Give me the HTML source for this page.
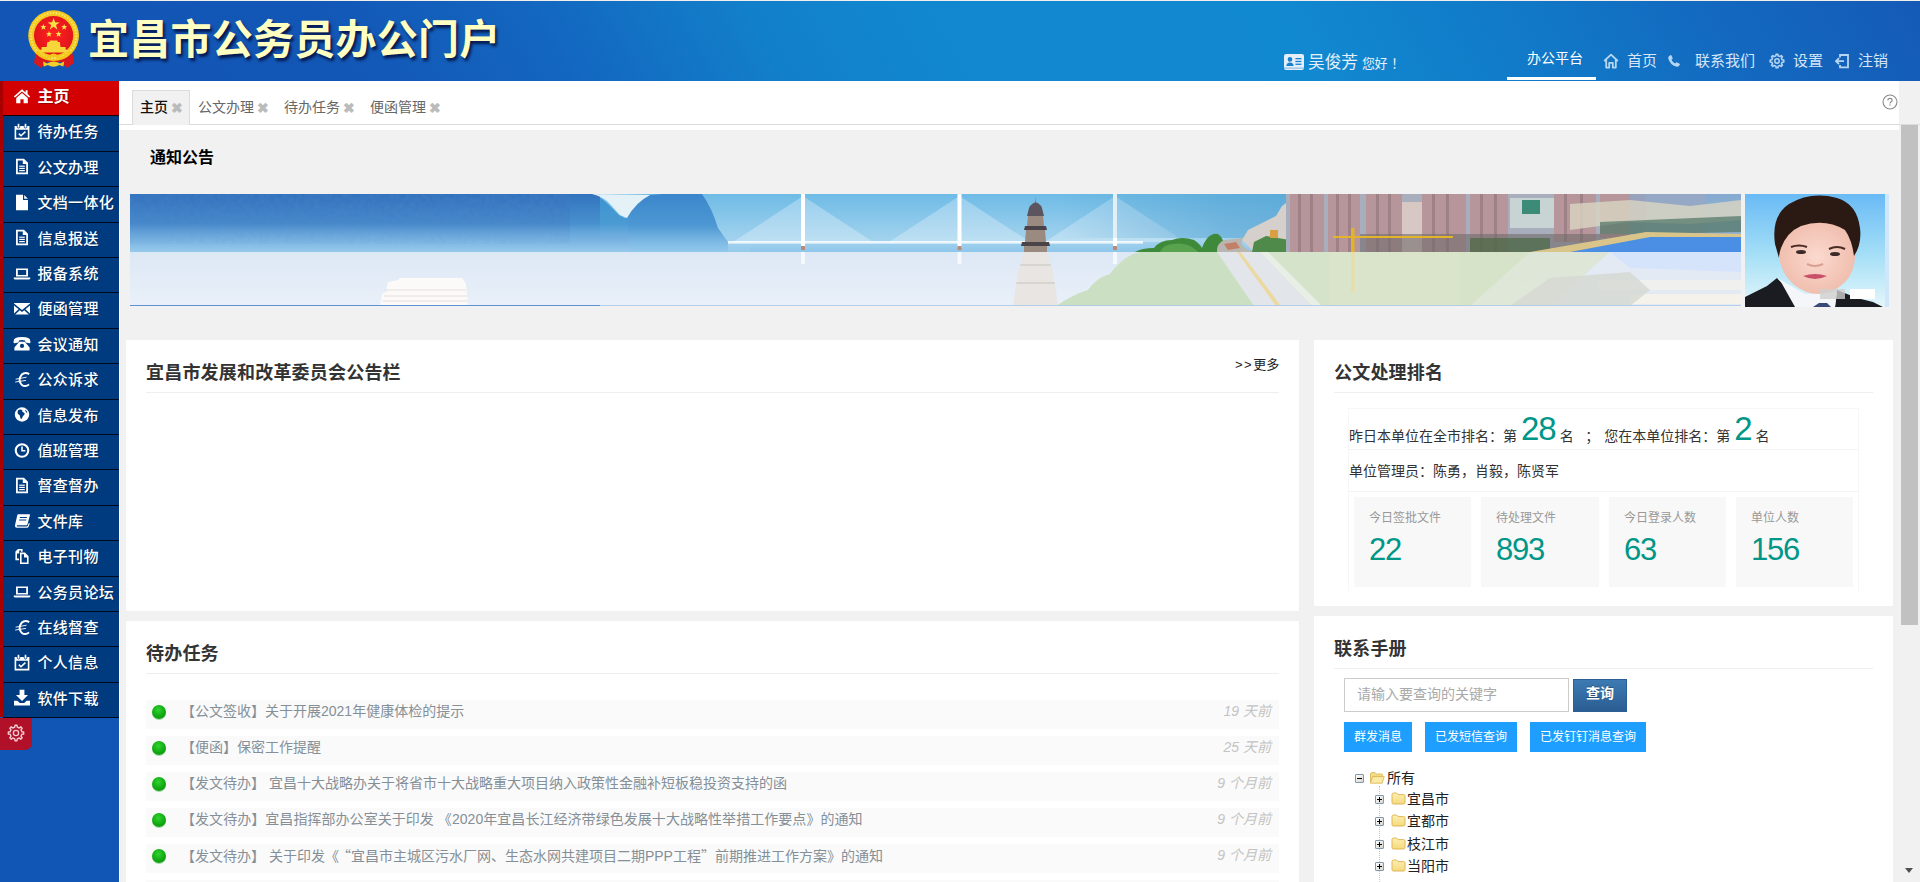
<!DOCTYPE html>
<html lang="zh-CN">
<head>
<meta charset="utf-8">
<title>宜昌市公务员办公门户</title>
<style>
*{box-sizing:border-box;margin:0;padding:0}
html,body{width:1920px;height:882px;overflow:hidden;background:#f1f1f1;font-family:"Liberation Sans","Noto Sans CJK SC",sans-serif;font-size:14px;color:#333}
.abs{position:absolute}
#header{position:absolute;left:0;top:0;width:1920px;height:81px;background:linear-gradient(60deg,#1255b5 0%,#1357b6 18%,#1366bf 29%,#127fca 40%,#1187cf 48%,#1189d0 67%,#1179c8 79%,#1369bf 89%,#145ab6 100%);border-top:1px solid #f3eeee}
#title{position:absolute;left:88px;top:9px;font-size:41px;font-weight:700;color:#ffffc2;letter-spacing:0.25px;line-height:60px;white-space:nowrap;text-shadow:2px 3px 3px rgba(0,0,40,.75)}
.nav{position:absolute;color:#d6e6f7;font-size:15px;line-height:20px;white-space:nowrap}
#side{position:absolute;left:0;top:81px;width:119px;height:801px;background:#1155b5}
#side .bar{position:absolute;left:0;top:0;width:3px;height:636px;background:#a80000}
.mi{position:absolute;left:3px;width:116px;height:35.4px;background:#003b7f;border-bottom:1.4px solid #000a1c;color:#fff;font-size:15px;font-weight:500;line-height:32px;padding-left:34.5px;white-space:nowrap;letter-spacing:0.3px;text-shadow:1px 1px 0 rgba(0,0,0,.3)}
.mi.act{background:#d20000;border-bottom-color:#1a0000;font-weight:700;font-size:16px;line-height:31px;letter-spacing:0}
.mi svg{position:absolute;left:10px;top:6.5px;width:18px;height:17px;fill:#fff}
#tabs{position:absolute;left:119px;top:81px;width:1780px;height:49px;background:#fff}
#tabline{position:absolute;left:119px;top:124px;width:1801px;height:1px;background:#dcdcdc}
.tab{position:absolute;top:97px;font-size:14px;line-height:20px;color:#666;white-space:nowrap}
.tab i{font-style:normal;color:#bbb;font-weight:700;font-size:14px;margin-left:2.5px;position:relative;top:.5px}
#tabact{position:absolute;left:132px;top:90px;width:58px;height:35px;background:#f1f1f1;border:1px solid #dcdcdc;border-bottom:none}
.panel{position:absolute;background:#fff}
.ptitle{position:absolute;font-size:18px;font-weight:700;color:#333;line-height:24px;white-space:nowrap;letter-spacing:.2px;margin-top:.7px}
.hr{position:absolute;height:1px;background:#eee}
.row{position:absolute;left:146px;width:1133px;height:29px;background:#fafafa;font-size:14px;line-height:24px;color:#858f97;white-space:nowrap;overflow:hidden}
.row b{position:absolute;left:5.5px;top:5px;width:14px;height:14px;border-radius:50%;background:radial-gradient(circle at 45% 35%,#2fd42f 0%,#12a812 55%,#0a8a0a 100%);box-shadow:0 1px 0 #9fd89f}
.row span{position:absolute;left:35px;top:-1px}
.row em{position:absolute;right:8px;top:-1px;color:#c3c3c3;font-style:italic}
.big{font-size:33px;color:#009688;letter-spacing:-0.9px;line-height:34px;position:relative;top:-1px}
.stat{position:absolute;top:497px;width:117px;height:90px;background:#f8f8f8;padding:12px 15px}
.stat h3{font-size:12px;font-weight:400;color:#999;line-height:18px;white-space:nowrap}
.stat p{font-size:31px;color:#009688;line-height:40px;letter-spacing:-1.2px;margin-top:2.5px;font-weight:300}
.bbtn{position:absolute;top:722px;height:30px;background:#1E9FFF;color:#fff;font-size:12px;line-height:30px;text-align:center;white-space:nowrap}
.tnode{position:absolute;height:20px;font-size:14px;line-height:20px;color:#222;white-space:nowrap}
.tnode svg,.tnode span,.tnode i{position:absolute}
.tnode span{top:0}
.tnode .pm{left:0;top:6px;width:9px;height:9px;border:1px solid #8497ab;background:linear-gradient(135deg,#fff,#d4d4d0);border-radius:1px}
.tnode .pm s{position:absolute;left:1px;top:3px;width:5px;height:1px;background:#000}
.tnode .pm u{position:absolute;left:3px;top:1px;width:1px;height:5px;background:#000}
q{quotes:none;font-family:"Noto Sans CJK SC",sans-serif}
q:before,q:after{content:none}
.gear{position:absolute;left:0;top:637px;width:32px;height:32px;background:#b01028;border-radius:0 0 7px 0;padding:6.3px 0 0 7.3px}
</style>
</head>
<body>
<div id="header">
  <div id="title">宜昌市公务员办公门户</div>
  <svg class="abs" style="left:24px;top:6px" width="60" height="64" viewBox="0 0 60 64">
    <defs><radialGradient id="eg" cx="50%" cy="45%" r="55%"><stop offset="0" stop-color="#f22"/><stop offset="1" stop-color="#e0141a"/></radialGradient></defs>
    <path d="M12 44 L10 56 L17 61 L23 55 H37 L43 61 L50 56 L48 44 Z" fill="#d8181c"/>
    <circle cx="29.6" cy="28.6" r="25.4" fill="#f3c81c"/>
    <circle cx="29.6" cy="28.6" r="22.6" fill="none" stroke="#f9e36a" stroke-width="2.2" stroke-dasharray="1.6 1.4"/>
    <circle cx="29.6" cy="28.6" r="19.6" fill="url(#eg)"/>
    <path d="M29.6 11 L31.1 15.3 L35.6 15.4 L32 18.1 L33.3 22.4 L29.6 19.8 L25.9 22.4 L27.2 18.1 L23.6 15.4 L28.1 15.3 Z" fill="#fbe04a"/>
    <path d="M19.4 17 l.8 2.1 2.2.1 -1.7 1.4 .6 2.2 -1.9-1.2 -1.9 1.2 .6-2.2 -1.7-1.4 2.2-.1Z M40.2 17 l.8 2.1 2.2.1 -1.7 1.4 .6 2.2 -1.9-1.2 -1.9 1.2 .6-2.2 -1.7-1.4 2.2-.1Z M25 24 l.8 2.1 2.2.1 -1.7 1.4 .6 2.2 -1.9-1.2 -1.9 1.2 .6-2.2 -1.7-1.4 2.2-.1Z M34.6 24 l.8 2.1 2.2.1 -1.7 1.4 .6 2.2 -1.9-1.2 -1.9 1.2 .6-2.2 -1.7-1.4 2.2-.1Z" fill="#fbe04a"/>
    <path d="M23.4 35 L25.4 35 L25.8 33.6 H33.4 L33.8 35 L35.8 35 L36.6 40 H41.6 V42.6 L44.6 43 V45.4 H14.6 V43 L17.6 42.6 V40 H22.6 Z" fill="#f6d63a"/>
    <path d="M13 44.5 Q20 54 26 49.4 Q29.6 46.4 33.2 49.4 Q39 54 46.2 44.5" fill="none" stroke="#f3c81c" stroke-width="2.6"/>
    <path d="M19 54.6 L23 56.4 Q29.6 52.6 36.2 56.4 L40.2 54.6 L39.4 59.4 L35.4 58 Q29.6 61.6 23.8 58 L19.8 59.4 Z" fill="#f3cf2a"/>
  </svg>
<div class="abs" style="left:1284px;top:53px;width:20px;height:16px;background:#e4eef9;border-radius:2px">
  <svg width="20" height="16" viewBox="0 0 20 16"><circle cx="6" cy="5.4" r="2.3" fill="#1580cc"/><path d="M2.4 12 Q2.4 8.4 6 8.4 Q9.6 8.4 9.6 12 Z" fill="#1580cc"/><rect x="11.4" y="4" width="6" height="1.3" fill="#1580cc"/><rect x="11.4" y="6.8" width="6" height="1.3" fill="#1580cc"/><rect x="11.4" y="9.6" width="6" height="1.3" fill="#1580cc"/><rect x="0" y="13.6" width="20" height="1" fill="#1580cc" opacity=".5"/></svg>
</div>
<div class="nav" style="left:1308px;top:51px;font-size:16.7px;color:#e6f0fa;line-height:22px">吴俊芳</div>
<div class="nav" style="left:1362px;top:54px;font-size:13px;color:#e6f0fa;line-height:18px;letter-spacing:-0.4px">您好<span style="margin-left:4px">！</span></div>
<div class="nav" style="left:1527px;top:47px;font-size:14px;color:#fff;line-height:20px">办公平台</div>
<div class="abs" style="left:1507px;top:76px;width:89px;height:3px;background:#fff"></div>
<svg class="abs" style="left:1603px;top:52px" width="16" height="16" viewBox="0 0 16 16"><path d="M1.2 8 L8 1.6 L14.8 8 M3.2 6.6 V14.6 H6.2 V9.8 H9.8 V14.6 H12.8 V6.6" fill="none" stroke="#b7d6f2" stroke-width="1.8" stroke-linejoin="round"/></svg>
<div class="nav" style="left:1627px;top:50px">首页</div>
<svg class="abs" style="left:1667px;top:53px" width="14" height="14" viewBox="0 0 14 14"><path d="M3.2 1.2 Q4.2 0.8 4.6 1.8 L5.6 4 Q5.8 4.8 5.2 5.2 L4.4 5.8 Q5.6 8.4 8.2 9.6 L8.8 8.8 Q9.2 8.2 10 8.4 L12.2 9.4 Q13.2 9.8 12.8 10.8 Q12 13 9.8 12.8 Q3.2 11.4 1.2 4.2 Q1 2 3.2 1.2 Z" fill="#b7d6f2"/></svg>
<div class="nav" style="left:1695px;top:50px">联系我们</div>
<svg class="abs" style="left:1769px;top:52px" width="16" height="16" viewBox="0 0 20 20"><path fill="none" stroke="#b7d6f2" stroke-width="1.9" stroke-linejoin="round" d="M16.45 8.59 L18.53 8.89 L18.53 11.11 L16.45 11.41 L15.56 13.56 L16.82 15.24 L15.24 16.82 L13.56 15.56 L11.41 16.45 L11.11 18.53 L8.89 18.53 L8.59 16.45 L6.44 15.56 L4.76 16.82 L3.18 15.24 L4.44 13.56 L3.55 11.41 L1.47 11.11 L1.47 8.89 L3.55 8.59 L4.44 6.44 L3.18 4.76 L4.76 3.18 L6.44 4.44 L8.59 3.55 L8.89 1.47 L11.11 1.47 L11.41 3.55 L13.56 4.44 L15.24 3.18 L16.82 4.76 L15.56 6.44 Z"/><circle cx="10" cy="10" r="2.8" fill="none" stroke="#b7d6f2" stroke-width="1.9"/></svg>
<div class="nav" style="left:1793px;top:50px">设置</div>
<svg class="abs" style="left:1834px;top:52px" width="16" height="16" viewBox="0 0 16 16"><path d="M6 4.4 V2 H14 V14.4 H6 V12" fill="none" stroke="#b7d6f2" stroke-width="1.8"/><path d="M10 8.2 H2.4 M5 5.2 L2 8.2 L5 11.2" fill="none" stroke="#b7d6f2" stroke-width="1.8"/></svg>
<div class="nav" style="left:1858px;top:50px">注销</div>

</div>
<div id="side"><div class="bar"></div>
<div class="mi act" style="top:0.0px"><svg viewBox="0 0 18 17"><path d="M9 1.2 L0.8 8.4 L2 9.6 L9 3.6 L16 9.6 L17.2 8.4 L14.6 6.1 V2.2 H12.6 V4.4 Z"/><path d="M9 5 L3.2 10 V15.2 H7.4 V11.2 H10.6 V15.2 H14.8 V10 Z"/></svg>主页</div>
<div class="mi" style="top:35.4px"><svg viewBox="0 0 18 17"><path fill-rule="evenodd" d="M1.6 3 H16.4 V16.4 H1.6 Z M3.2 6.8 V14.8 H14.8 V6.8 Z"/><rect x="4.2" y="0.6" width="2.6" height="4.4" rx="1.1" stroke="#003b7f" stroke-width=".8"/><rect x="11.2" y="0.6" width="2.6" height="4.4" rx="1.1" stroke="#003b7f" stroke-width=".8"/><path d="M5.8 10.6 L8 12.8 L12.4 8.6" fill="none" stroke="#fff" stroke-width="1.5"/></svg>待办任务</div>
<div class="mi" style="top:70.8px"><svg viewBox="0 0 18 17"><path fill-rule="evenodd" d="M3 0.8 H11 L15 4.8 V16.2 H3 Z M4.8 2.6 V14.4 H13.2 V6 H9.8 V2.6 Z"/><rect x="6.2" y="7.6" width="5.6" height="1.2"/><rect x="6.2" y="9.8" width="5.6" height="1.2"/><rect x="6.2" y="12" width="5.6" height="1.2"/></svg>公文办理</div>
<div class="mi" style="top:106.2px"><svg viewBox="0 0 18 17"><path d="M3 0.8 H10 V6 H15 V16.2 H3 Z M11.2 0.9 L14.9 4.8 H11.2 Z"/></svg>文档一体化</div>
<div class="mi" style="top:141.6px"><svg viewBox="0 0 18 17"><path fill-rule="evenodd" d="M3 0.8 H11 L15 4.8 V16.2 H3 Z M4.8 2.6 V14.4 H13.2 V6 H9.8 V2.6 Z"/><rect x="6.2" y="7.6" width="5.6" height="1.2"/><rect x="6.2" y="9.8" width="5.6" height="1.2"/><rect x="6.2" y="12" width="5.6" height="1.2"/></svg>信息报送</div>
<div class="mi" style="top:177.0px"><svg viewBox="0 0 18 17"><path fill-rule="evenodd" d="M3 3.4 H15 V11.6 H3 Z M4.8 5 V10 H13.2 V5 Z"/><path d="M0.8 12.6 H17.2 V13.2 Q17.2 14.4 15.8 14.4 H2.2 Q0.8 14.4 0.8 13.2 Z"/></svg>报备系统</div>
<div class="mi" style="top:212.4px"><svg viewBox="0 0 18 17"><path d="M1 3 H17 V3.6 L9 10 L1 3.6 Z"/><path d="M1 5.6 L5.6 9.2 L1 13.6 Z M17 5.6 L12.4 9.2 L17 13.6 Z M6.8 10.2 L9 11.9 L11.2 10.2 L15.8 14.6 H2.2 Z"/></svg>便函管理</div>
<div class="mi" style="top:247.8px"><svg viewBox="0 0 18 17"><path d="M0.6 6.2 Q0.6 2 9 2 Q17.4 2 17.4 6.2 V7.6 Q17.4 8.4 16.4 8.2 L12.8 7.4 Q12.2 7.2 12.2 6.6 V5.4 Q9 4.6 5.8 5.4 V6.6 Q5.8 7.2 5.2 7.4 L1.6 8.2 Q0.6 8.4 0.6 7.6 Z"/><path fill-rule="evenodd" d="M6.2 6.8 H11.8 L16.6 12.6 V15.4 H1.4 V12.6 Z M9 8.8 A2.1 2.1 0 1 0 9 13 A2.1 2.1 0 1 0 9 8.8 Z"/></svg>会议通知</div>
<div class="mi" style="top:283.2px"><svg viewBox="0 0 18 17"><path d="M16.2 3.2 Q12 0.4 8.6 3.8 Q5.8 7 7 11 Q8.6 15.4 12.6 15 Q14.6 14.8 16 13.4" fill="none" stroke="#fff" stroke-width="2"/><path d="M2.6 8.2 L13.6 6.2 M2.2 11 L13 9.4" stroke="#fff" stroke-width=".9" fill="none"/></svg>公众诉求</div>
<div class="mi" style="top:318.6px"><svg viewBox="0 0 18 17"><circle cx="9" cy="8.5" r="7.2"/><path d="M5 4.2 Q7.4 2.6 9.4 4.4 Q8.6 6 10.6 6.4 Q12.6 7.4 11 9 Q9.4 10.2 9 12.4 Q7.6 13.6 7.2 11.4 Q7.4 9.4 5.6 8.6 Q3.8 7 5 4.2 Z M12 3.4 Q14.6 4.8 14.4 7.4 Q13 6.4 12.4 5 Z" fill="#003b7f"/></svg>信息发布</div>
<div class="mi" style="top:354.0px"><svg viewBox="0 0 18 17"><path fill-rule="evenodd" d="M9 1.2 A7.3 7.3 0 1 0 9 15.8 A7.3 7.3 0 1 0 9 1.2 Z M9 3.3 A5.2 5.2 0 1 1 9 13.7 A5.2 5.2 0 1 1 9 3.3 Z"/><path d="M8.2 4.6 H9.8 V8 H12.4 V9.6 H8.2 Z"/></svg>值班管理</div>
<div class="mi" style="top:389.4px"><svg viewBox="0 0 18 17"><path fill-rule="evenodd" d="M3 0.8 H11 L15 4.8 V16.2 H3 Z M4.8 2.6 V14.4 H13.2 V6 H9.8 V2.6 Z"/><rect x="6.2" y="7.6" width="5.6" height="1.2"/><rect x="6.2" y="9.8" width="5.6" height="1.2"/><rect x="6.2" y="12" width="5.6" height="1.2"/></svg>督查督办</div>
<div class="mi" style="top:424.8px"><svg viewBox="0 0 18 17"><path d="M5.4 2.2 H16.4 Q17.2 2.2 17 3 L14.4 12.4 Q14.2 13.2 13.4 13.2 H4.6 Q3.6 13.4 3.8 14.2 Q4 14.6 4.6 14.6 H13.6 Q14.4 14.6 14.8 13.8 L15.8 11 L16.8 11.4 L15.6 14.8 Q15.2 15.8 14 15.8 H4 Q1.6 15.6 2 13.2 L4.2 3.6 Q4.4 2.2 5.4 2.2 Z M7 5 L6.7 6 H13.7 L14 5 Z M6.4 7.4 L6.1 8.4 H13.1 L13.4 7.4 Z"/></svg>文件库</div>
<div class="mi" style="top:460.2px"><svg viewBox="0 0 18 17"><path fill-rule="evenodd" d="M7 4.6 H12 L15.6 8.2 V16 H7 Z M8.6 6.2 V14.4 H14 V9.4 H11 V6.2 Z"/><path fill-rule="evenodd" d="M2.4 3.6 L5 1 H9.6 V3.8 H8 V2.6 H6.2 V5.4 H4 V10.6 H6 V12.2 H2.4 Z"/></svg>电子刊物</div>
<div class="mi" style="top:495.6px"><svg viewBox="0 0 18 17"><path fill-rule="evenodd" d="M3 3.4 H15 V11.6 H3 Z M4.8 5 V10 H13.2 V5 Z"/><path d="M0.8 12.6 H17.2 V13.2 Q17.2 14.4 15.8 14.4 H2.2 Q0.8 14.4 0.8 13.2 Z"/></svg>公务员论坛</div>
<div class="mi" style="top:531.0px"><svg viewBox="0 0 18 17"><path d="M16.2 3.2 Q12 0.4 8.6 3.8 Q5.8 7 7 11 Q8.6 15.4 12.6 15 Q14.6 14.8 16 13.4" fill="none" stroke="#fff" stroke-width="2"/><path d="M2.6 8.2 L13.6 6.2 M2.2 11 L13 9.4" stroke="#fff" stroke-width=".9" fill="none"/></svg>在线督查</div>
<div class="mi" style="top:566.4px"><svg viewBox="0 0 18 17"><path fill-rule="evenodd" d="M1.6 3 H16.4 V16.4 H1.6 Z M3.2 6.8 V14.8 H14.8 V6.8 Z"/><rect x="4.2" y="0.6" width="2.6" height="4.4" rx="1.1" stroke="#003b7f" stroke-width=".8"/><rect x="11.2" y="0.6" width="2.6" height="4.4" rx="1.1" stroke="#003b7f" stroke-width=".8"/><path d="M5.8 10.6 L8 12.8 L12.4 8.6" fill="none" stroke="#fff" stroke-width="1.5"/></svg>个人信息</div>
<div class="mi" style="top:601.8px"><svg viewBox="0 0 18 17"><path d="M6.6 0.8 H11.4 V6 H15 L9 12 L3 6 H6.6 Z"/><path d="M1 11.8 H4.4 L6.8 14 H11.2 L13.6 11.8 H17 V16.4 H1 Z"/></svg>软件下载</div>
<div class="gear"><svg viewBox="0 0 20 20" width="18" height="18"><path fill="none" stroke="#f3c9cf" stroke-width="1.6" stroke-linejoin="round" d="M16.45 8.59 L18.53 8.89 L18.53 11.11 L16.45 11.41 L15.56 13.56 L16.82 15.24 L15.24 16.82 L13.56 15.56 L11.41 16.45 L11.11 18.53 L8.89 18.53 L8.59 16.45 L6.44 15.56 L4.76 16.82 L3.18 15.24 L4.44 13.56 L3.55 11.41 L1.47 11.11 L1.47 8.89 L3.55 8.59 L4.44 6.44 L3.18 4.76 L4.76 3.18 L6.44 4.44 L8.59 3.55 L8.89 1.47 L11.11 1.47 L11.41 3.55 L13.56 4.44 L15.24 3.18 L16.82 4.76 L15.56 6.44 Z"/><circle cx="10" cy="10" r="2.9" fill="none" stroke="#f3c9cf" stroke-width="1.5"/></svg></div>
</div>
<div id="tabs"></div>
<div id="tabline"></div>
<div id="tabact"></div>
<div class="tab" style="left:140px;color:#111;font-weight:500">主页<i>✖</i></div>
<div class="tab" style="left:198px">公文办理<i>✖</i></div>
<div class="tab" style="left:284px">待办任务<i>✖</i></div>
<div class="tab" style="left:370px">便函管理<i>✖</i></div>
<div class="abs" style="left:119px;top:130px;width:1px;height:752px;background:#fff"></div>
<div class="abs" style="left:150px;top:147px;font-size:16px;font-weight:700;color:#000;line-height:22px;white-space:nowrap">通知公告</div>
<!--BANNER_START-->
<svg class="abs" style="left:130px;top:194px" width="1611" height="112" viewBox="0 0 1611 112">
<defs>
<linearGradient id="bL" x1="0" y1="0" x2="0" y2="1"><stop offset="0" stop-color="#3272bd"/><stop offset=".5" stop-color="#4588ca"/><stop offset=".8" stop-color="#6aa8dc"/><stop offset="1" stop-color="#8fc3e9"/></linearGradient>
<linearGradient id="bS" x1="0" y1="0" x2="0" y2="1"><stop offset="0" stop-color="#6ebbe6"/><stop offset=".8" stop-color="#a3d3ee"/><stop offset="1" stop-color="#8fc6ea"/></linearGradient>
<linearGradient id="bW" x1="0" y1="0" x2="0" y2="1"><stop offset="0" stop-color="#dde8f5"/><stop offset="1" stop-color="#e9f0f9"/></linearGradient>
<linearGradient id="bM" x1="0" y1="0" x2="1" y2="0"><stop offset="0" stop-color="#3c80c8" stop-opacity="0"/><stop offset="1" stop-color="#3c80c8" stop-opacity="1"/></linearGradient>
<linearGradient id="fadeL" x1="0" y1="0" x2="1" y2="0"><stop offset="0" stop-color="#6ebbe6" stop-opacity="0"/><stop offset="1" stop-color="#6ebbe6"/></linearGradient>
<filter id="tx" x="0" y="0" width="100%" height="100%"><feTurbulence type="fractalNoise" baseFrequency=".2" numOctaves="2" seed="3" result="n"/><feColorMatrix in="n" type="matrix" values="0 0 0 0 0.1  0 0 0 0 0.25  0 0 0 0 0.6  0 0 0 .9 -.25"/><feComposite in2="SourceGraphic" operator="in"/></filter>
<linearGradient id="m2" x1="0" y1="0" x2="0" y2="1"><stop offset="0" stop-color="#3b86cb"/><stop offset=".6" stop-color="#4f9ad4"/><stop offset="1" stop-color="#86c0e8"/></linearGradient>
<linearGradient id="m1" x1="0" y1="0" x2="0" y2="1"><stop offset="0" stop-color="#3a93cf"/><stop offset=".5" stop-color="#4a9ad3"/><stop offset=".8" stop-color="#6aa8dc"/><stop offset="1" stop-color="#8fc3e9"/></linearGradient>
<linearGradient id="mf2" x1="0" y1="0" x2="0" y2="1"><stop offset="0" stop-color="#3272bd"/><stop offset=".5" stop-color="#4588ca" stop-opacity=".6"/><stop offset=".8" stop-color="#6aa8dc" stop-opacity="0"/></linearGradient>
<linearGradient id="sk2" x1="0" y1="0" x2="1" y2="0"><stop offset="0" stop-color="#4f9fd0" stop-opacity="0"/><stop offset=".7" stop-color="#4f9fd0" stop-opacity=".5"/><stop offset="1" stop-color="#4f9fd0" stop-opacity=".6"/></linearGradient>
<linearGradient id="mf" x1="0" y1="0" x2="1" y2="0"><stop offset="0" stop-color="#3f84ca"/><stop offset="1" stop-color="#3f84ca" stop-opacity="0"/></linearGradient>
<linearGradient id="hz" x1="0" y1="0" x2="0" y2="1"><stop offset="0" stop-color="#9fd0ee" stop-opacity="0"/><stop offset="1" stop-color="#9fd0ee" stop-opacity=".75"/></linearGradient>
</defs>
<!-- sky base -->
<rect x="0" y="0" width="1611" height="58" fill="url(#bS)"/>
<!-- left dark watercolor -->
<rect x="0" y="0" width="470" height="58" fill="url(#bL)"/>
<rect x="0" y="0" width="470" height="50" fill="#1f58ad" filter="url(#tx)" opacity=".5"/>
<!-- mountains -->
<path d="M496 24 Q506 8 520 1 L532 0 H572 Q582 14 588 34 L598 48 V58 H470 V30 Z" fill="url(#m2)"/>
<path d="M440 0 H458 Q470 2 478 10 L489 21 L497 25 L500 58 H440 Z" fill="url(#m1)"/>
<rect x="440" y="0" width="30" height="58" fill="url(#mf2)"/>
<path d="M462 0 Q474 3 480 10 L490 21 L497 24 Q506 8 520 1 Z" fill="#e4f2f8"/>
<rect x="0" y="30" width="620" height="28" fill="url(#hz)" opacity=".6"/>
<!-- bridge -->
<g fill="#fff">
<path d="M673 2 L603 48 H743 Z" opacity=".28"/><path d="M829.5 2 L759 48 H900 Z" opacity=".28"/><path d="M985 2 L915 48 H1055 Z" opacity=".28"/>
<rect x="598" y="47" width="415" height="2.6" opacity=".8"/>
<rect x="671" y="0" width="4" height="54"/><rect x="827.5" y="0" width="4" height="54"/><rect x="983" y="0" width="4" height="54"/>
</g>
<rect x="671" y="52" width="4" height="4" fill="#b98a7a"/><rect x="827.5" y="52" width="4" height="4" fill="#b98a7a"/><rect x="983" y="52" width="4" height="4" fill="#b98a7a"/>
<!-- right sky darker -->
<rect x="930" y="0" width="240" height="44" fill="url(#sk2)"/>
<!-- trees upper -->
<path d="M1005 58 Q1012 54 1024 54 Q1030 46 1042 46 Q1052 42 1064 46 Q1070 50 1072 54 Q1078 38 1088 40 Q1094 44 1096 58 Z" fill="#3f8a3a"/>
<path d="M1030 58 Q1034 50 1044 50 Q1056 48 1066 56 L1068 58 Z" fill="#5aa34e"/>
<!-- road upper -->
<path d="M1087 58 Q1086 50 1094 46 L1114 44 Q1106 52 1124 58 Z" fill="#b9b5b0"/>
<path d="M1094 50 L1106 48 L1110 54 L1098 56 Z" fill="#c86a4a" opacity=".7"/>
<!-- small buildings -->
<path d="M1112 46 L1118 36 L1130 30 L1146 22 L1152 12 L1160 6 V58 H1124 Z" fill="#d5d0cc"/>
<path d="M1122 58 L1124 48 L1136 42 L1160 46 V58 Z" fill="#4f8a4a"/>
<rect x="1140" y="36" width="8" height="8" fill="#d8a040"/>
<!-- tall buildings -->
<rect x="1156" y="0" width="420" height="58" fill="#a8aebc"/>
<g fill="#b6969a">
<rect x="1160" y="0" width="34" height="58"/><rect x="1198" y="0" width="32" height="58"/><rect x="1236" y="0" width="36" height="58"/><rect x="1292" y="0" width="44" height="58"/><rect x="1340" y="0" width="38" height="58"/><rect x="1424" y="0" width="42" height="48"/><rect x="1470" y="0" width="46" height="44"/>
</g>
<g fill="#8c6f78" opacity=".55">
<rect x="1168" y="0" width="3" height="58"/><rect x="1180" y="0" width="3" height="58"/><rect x="1206" y="0" width="3" height="58"/><rect x="1218" y="0" width="3" height="58"/><rect x="1246" y="0" width="3" height="58"/><rect x="1258" y="0" width="3" height="58"/><rect x="1302" y="0" width="3" height="58"/><rect x="1316" y="0" width="3" height="58"/><rect x="1350" y="0" width="3" height="58"/><rect x="1364" y="0" width="3" height="58"/><rect x="1434" y="0" width="3" height="48"/><rect x="1450" y="0" width="3" height="48"/>
</g>
<rect x="1272" y="8" width="20" height="50" fill="#d8c8c4"/>
<rect x="1380" y="4" width="44" height="30" fill="#c8d4d4"/><rect x="1392" y="6" width="18" height="14" fill="#3c8a78"/>
<rect x="1230" y="40" width="320" height="18" fill="#6f6a6c" opacity=".6"/>
<rect x="1340" y="44" width="80" height="14" fill="#4a6a44" opacity=".7"/>
<!-- crane -->
<rect x="1221" y="34" width="3.5" height="24" fill="#e3b32a"/><rect x="1203" y="42" width="120" height="2" fill="#e3b32a"/>
<!-- right city -->
<rect x="1500" y="0" width="111" height="58" fill="#8fa5c8" opacity=".75"/>
<path d="M1440 10 L1500 6 L1560 12 L1611 6 V26 L1560 30 L1500 28 L1440 36 Z" fill="#d9d6c2" opacity=".8"/>
<path d="M1470 28 L1611 22 V38 L1520 40 L1470 40 Z" fill="#557a6a" opacity=".75"/>
<path d="M1440 58 L1520 42 H1611 V58 Z" fill="#4a8fe4"/>
<path d="M1400 58 L1516 38 L1611 40 V43 L1520 43 L1440 58 Z" fill="#d9c58a"/>
<!-- pagoda upper -->
<path d="M905.5 3 L906 8 Q899 10 898 18 L897 22 H914 L913 18 Q912 10 905.5 8 Z" fill="#5c5560"/>
<path d="M898 22 H913 L914 32 H897 Z" fill="#9a8a80"/><path d="M895 32 H916 L917 36 H894 Z" fill="#4a4448"/>
<path d="M896 36 H915 L916 48 H895 Z" fill="#9a8a80"/><path d="M892 48 H919 L920 52 H891 Z" fill="#4a4448"/><path d="M894 52 H917 V58 H894 Z" fill="#9a8a80"/>
<!-- lower half -->
<rect x="0" y="58" width="1611" height="54" fill="url(#bW)"/>
<!-- reflections -->
<rect x="671" y="58" width="4" height="12" fill="#fff" opacity=".7"/><rect x="827.5" y="58" width="4" height="12" fill="#fff" opacity=".7"/><rect x="983" y="58" width="4" height="12" fill="#fff" opacity=".7"/>
<!-- ship -->
<path d="M250 111 L252 100 L256 98 L258 88 L268 86 L270 84 H332 L336 90 L338 111 Z" fill="#fbfaf8"/>
<g stroke="#e4e0dc" stroke-width="1"><path d="M255 96 H336 M254 102 H337 M253 107 H338"/></g>
<!-- trees lower (faded) -->
<path d="M926 112 Q944 100 958 96 Q966 84 980 80 Q990 66 1003 60 L1010 58 H1400 L1340 112 Z" fill="#cbe0c2"/>
<path d="M1130 58 H1330 V112 H1182 Z" fill="#d6e4cc" opacity=".8"/>
<path d="M1200 58 H1480 L1420 112 H1200 Z" fill="#dbe4ca" opacity=".7"/>
<rect x="1221" y="58" width="3.5" height="40" fill="#ecd9a0" opacity=".8"/>
<!-- road lower -->
<path d="M1087 58 H1130 L1182 112 H1124 Z" fill="#e2e5ea"/>
<path d="M1107 58 L1110.5 58 L1151 112 H1146 Z" fill="#ecd9a0"/>
<path d="M1130 58 L1182 112 H1192 L1138 58 Z" fill="#eef0ee" opacity=".8"/>
<!-- right lower (dam) -->
<path d="M1420 112 L1480 58 H1611 V112 Z" fill="#e3eaf4"/>
<path d="M1480 58 H1611 V78 L1500 74 Z" fill="#d6e4fb"/>
<rect x="1468" y="86" width="143" height="10" fill="#f0f0ee"/><rect x="1500" y="100" width="111" height="10" fill="#f4f2ea"/>
<path d="M1380 112 L1420 84 L1500 78 L1520 96 L1500 112 Z" fill="#d5d8d2" opacity=".8"/>
<!-- pagoda lower -->
<path d="M893 58 H918 L920 72 H891 Z M889 72 H922 L924 90 H887 Z M886 90 H925 L928 112 H883 Z" fill="#e8e5e2"/>
<path d="M890 71 H921 M886 89 H925" stroke="#d2cfcc" stroke-width="1.4"/>
<!-- bottom line -->
<rect x="0" y="111" width="470" height="1" fill="#5f93d4"/><rect x="470" y="111" width="1141" height="1" fill="#a8c8ea" opacity=".8"/>
</svg>
<!-- portrait -->
<svg class="abs" style="left:1745px;top:194px" width="144" height="113" viewBox="0 0 144 113">
<defs><linearGradient id="pb" x1="0" y1="0" x2="0" y2="1"><stop offset="0" stop-color="#69baf5"/><stop offset=".55" stop-color="#a6e0f7"/><stop offset="1" stop-color="#e4f6fa"/></linearGradient>
<radialGradient id="pf" cx="50%" cy="50%" r="60%"><stop offset="0" stop-color="#fbd9cf"/><stop offset="1" stop-color="#eeb9a8"/></radialGradient></defs>
<rect x="0" y="0" width="140" height="113" fill="url(#pb)"/><rect x="140" y="0" width="4" height="113" fill="#cfe6fb"/>
<path d="M0 113 V103 L22 92 L32 84 L60 113 Z" fill="#1b1b22"/>
<path d="M90 113 L92 96 L112 104 L128 108 L138 113 Z" fill="#1b1b22"/>
<path d="M32 84 L36 88 L50 113 H90 L92 98 L60 100 Z" fill="#f4f6fa"/>
<path d="M68 113 L74 109 L82 109 L86 113 Z" fill="#3a4a78"/>
<path d="M34 50 Q34 26 72 26 Q110 26 110 52 Q112 76 100 88 Q88 100 74 100 Q60 100 48 90 Q32 76 34 50 Z" fill="url(#pf)"/>
<path d="M30 50 Q26 22 44 10 Q66 -3 92 4 Q112 10 115 34 Q117 50 109 62 Q107 46 100 36 Q80 24 56 32 Q42 38 36 54 Q34 60 34 64 Z" fill="#2b1a14"/>
<path d="M46 53 Q54 50 62 53 M84 55 Q92 51 100 55" stroke="#4a2a22" stroke-width="2" fill="none"/>
<ellipse cx="56" cy="58" rx="5" ry="2" fill="#3a2a28"/><ellipse cx="90" cy="60" rx="5" ry="2" fill="#3a2a28"/>
<path d="M58 82 Q70 78 82 82 Q70 88 58 82 Z" fill="#c8506a"/><path d="M62 70 Q70 74 78 70" stroke="#d8a090" stroke-width="2" fill="none"/>
<rect x="75" y="95" width="25" height="10" fill="#cfcfcf" opacity=".8"/><rect x="105" y="95" width="25" height="10" fill="#fff"/>
</svg>
<!--BANNER_END-->
<!-- panel: bulletin -->
<div class="panel" style="left:126px;top:340px;width:1173px;height:271px"></div>
<div class="ptitle" style="left:146px;top:360px">宜昌市发展和改革委员会公告栏</div>
<div class="abs" style="left:1235px;top:356px;font-size:13px;line-height:18px;color:#222;white-space:nowrap"><span style="letter-spacing:1.5px">&gt;&gt;</span>更多</div>
<div class="hr" style="left:146px;top:392px;width:1133px"></div>
<!-- panel: todo -->
<div class="panel" style="left:126px;top:621px;width:1173px;height:261px"></div>
<div class="ptitle" style="left:146px;top:641px">待办任务</div>
<div class="hr" style="left:146px;top:673px;width:1133px"></div>
<div class="row" style="top:700px"><b></b><span>【公文签收】关于开展2021年健康体检的提示</span><em>19 天前</em></div>
<div class="row" style="top:736px"><b></b><span>【便函】保密工作提醒</span><em>25 天前</em></div>
<div class="row" style="top:772px"><b></b><span>【发文待办】 宜昌十大战略办关于将省市十大战略重大项目纳入政策性金融补短板稳投资支持的函</span><em>9 个月前</em></div>
<div class="row" style="top:808px"><b></b><span style="letter-spacing:.05px">【发文待办】宜昌指挥部办公室关于印发 《2020年宜昌长江经济带绿色发展十大战略性举措工作要点》的通知</span><em>9 个月前</em></div>
<div class="row" style="top:844px"><b></b><span>【发文待办】 关于印发《<q style="padding-left:5px">“</q>宜昌市主城区污水厂网、生态水网共建项目二期PPP工程<q>”</q>前期推进工作方案》的通知</span><em>9 个月前</em></div>
<div class="row" style="top:880px;height:2px"></div>

<!-- panel: ranking -->
<div class="panel" style="left:1314px;top:340px;width:579px;height:266px"></div>
<div class="ptitle" style="left:1334px;top:360px">公文处理排名</div>
<div class="hr" style="left:1334px;top:392px;width:539px"></div>
<div class="abs" style="left:1348px;top:408px;width:511px;height:183px;border:1px solid #f7f7f7;border-bottom:none"></div>
<div class="abs" style="left:1348px;top:449px;width:511px;height:1px;background:#f4f4f4"></div>
<div class="abs" style="left:1348px;top:491px;width:511px;height:1px;background:#f4f4f4"></div>
<div class="abs rk" style="left:1349px;top:413px;height:34px;line-height:44px;font-size:14px;color:#333;white-space:nowrap">昨日本单位在全市排名：第 <span class="big">28</span> 名 &nbsp;&nbsp;；<span style="display:inline-block;width:5px"></span>您在本单位排名：第 <span class="big">2</span> 名</div>
<div class="abs" style="left:1349px;top:460px;line-height:22px;font-size:14px;color:#333;white-space:nowrap">单位管理员：陈勇，肖毅，陈贤军</div>
<div class="stat" style="left:1354px"><h3>今日签批文件</h3><p>22</p></div>
<div class="stat" style="left:1481px;width:118px"><h3>待处理文件</h3><p>893</p></div>
<div class="stat" style="left:1609px"><h3>今日登录人数</h3><p>63</p></div>
<div class="stat" style="left:1736px"><h3>单位人数</h3><p>156</p></div>
<!-- panel: contacts -->
<div class="panel" style="left:1314px;top:616px;width:579px;height:266px"></div>
<div class="ptitle" style="left:1334px;top:636px">联系手册</div>
<div class="hr" style="left:1334px;top:668px;width:539px"></div>
<div class="abs" style="left:1344px;top:678px;width:225px;height:34px;border:1px solid #ccc;background:#fff;font-size:14px;line-height:30px;color:#a9a9a9;padding-left:12px;white-space:nowrap">请输入要查询的关键字</div>
<div class="abs" style="left:1573px;top:679px;width:54px;height:33px;background:linear-gradient(#3d7ab3,#2a5d92);border:1px solid #2b5f95;color:#fff;font-size:14px;font-weight:700;line-height:27px;text-align:center;text-shadow:0 -1px 0 rgba(0,0,0,.25)">查询</div>
<div class="bbtn" style="left:1344px;width:68px">群发消息</div>
<div class="bbtn" style="left:1425px;width:92px">已发短信查询</div>
<div class="bbtn" style="left:1530px;width:116px">已发钉钉消息查询</div>
<!-- tree -->
<svg width="0" height="0" style="position:absolute"><defs><linearGradient id="fg" x1="0" y1="0" x2="0" y2="1"><stop offset="0" stop-color="#fdf0b4"/><stop offset="1" stop-color="#f4d97e"/></linearGradient></defs></svg>
<div class="abs" style="left:1379px;top:786px;width:0;height:96px;border-left:1px dotted #c4c4c4"></div>
<div class="tnode" style="left:1355px;top:768px"><i class="pm"><s></s></i><svg width="16" height="14" viewBox="0 0 16 14" style="left:14px;top:3px"><path d="M1.5 3 Q1.5 1.6 3 1.6 H6 L7.4 3 H12.4 Q13.6 3 13.6 4.4 V5.4 H4 L1.5 11 Z" fill="#f5dc8c" stroke="#d9b44e" stroke-width=".8"/><path d="M3.6 5.6 H15.2 L13.2 12.2 H1.4 Z" fill="#fbeaa6" stroke="#d9b44e" stroke-width=".8"/></svg><span style="left:32px">所有</span></div>
<div class="tnode" style="left:1375px;top:788.5px"><i class="pm"><s></s><u></u></i><svg width="15" height="13" viewBox="0 0 15 13" style="left:16px;top:3px"><path d="M1 2.6 Q1 1 2.6 1 H5.6 L7 2.6 H12.6 Q14 2.6 14 4 V10.6 Q14 12 12.6 12 H2.4 Q1 12 1 10.6 Z" fill="url(#fg)" stroke="#dcb04c" stroke-width=".9"/></svg><span style="left:32px">宜昌市</span></div>
<div class="tnode" style="left:1375px;top:811px"><i class="pm"><s></s><u></u></i><svg width="15" height="13" viewBox="0 0 15 13" style="left:16px;top:3px"><path d="M1 2.6 Q1 1 2.6 1 H5.6 L7 2.6 H12.6 Q14 2.6 14 4 V10.6 Q14 12 12.6 12 H2.4 Q1 12 1 10.6 Z" fill="url(#fg)" stroke="#dcb04c" stroke-width=".9"/></svg><span style="left:32px">宜都市</span></div>
<div class="tnode" style="left:1375px;top:834px"><i class="pm"><s></s><u></u></i><svg width="15" height="13" viewBox="0 0 15 13" style="left:16px;top:3px"><path d="M1 2.6 Q1 1 2.6 1 H5.6 L7 2.6 H12.6 Q14 2.6 14 4 V10.6 Q14 12 12.6 12 H2.4 Q1 12 1 10.6 Z" fill="url(#fg)" stroke="#dcb04c" stroke-width=".9"/></svg><span style="left:32px">枝江市</span></div>
<div class="tnode" style="left:1375px;top:856px"><i class="pm"><s></s><u></u></i><svg width="15" height="13" viewBox="0 0 15 13" style="left:16px;top:3px"><path d="M1 2.6 Q1 1 2.6 1 H5.6 L7 2.6 H12.6 Q14 2.6 14 4 V10.6 Q14 12 12.6 12 H2.4 Q1 12 1 10.6 Z" fill="url(#fg)" stroke="#dcb04c" stroke-width=".9"/></svg><span style="left:32px">当阳市</span></div>
<!-- scrollbar + help -->
<div class="abs" style="left:1899px;top:125px;width:21px;height:757px;background:#f1f1f1"></div>
<div class="abs" style="left:1901px;top:125px;width:17px;height:500px;background:#c1c1c1"></div>
<div class="abs" style="left:1905px;top:868px;width:0;height:0;border-left:4.5px solid transparent;border-right:4.5px solid transparent;border-top:5px solid #505050"></div>
<svg class="abs" style="left:1881px;top:93.3px" width="18" height="18" viewBox="0 0 18 18"><circle cx="9" cy="9" r="7" fill="none" stroke="#8a8a8a" stroke-width="1.1"/><path d="M6.9 7.4 Q6.9 5.4 9 5.4 Q11.1 5.4 11.1 7.2 Q11.1 8.2 9.9 8.9 Q9 9.4 9 10.4" fill="none" stroke="#8a8a8a" stroke-width="1.1"/><rect x="8.4" y="11.4" width="1.2" height="1.2" fill="#8a8a8a"/></svg>

</body>
</html>
